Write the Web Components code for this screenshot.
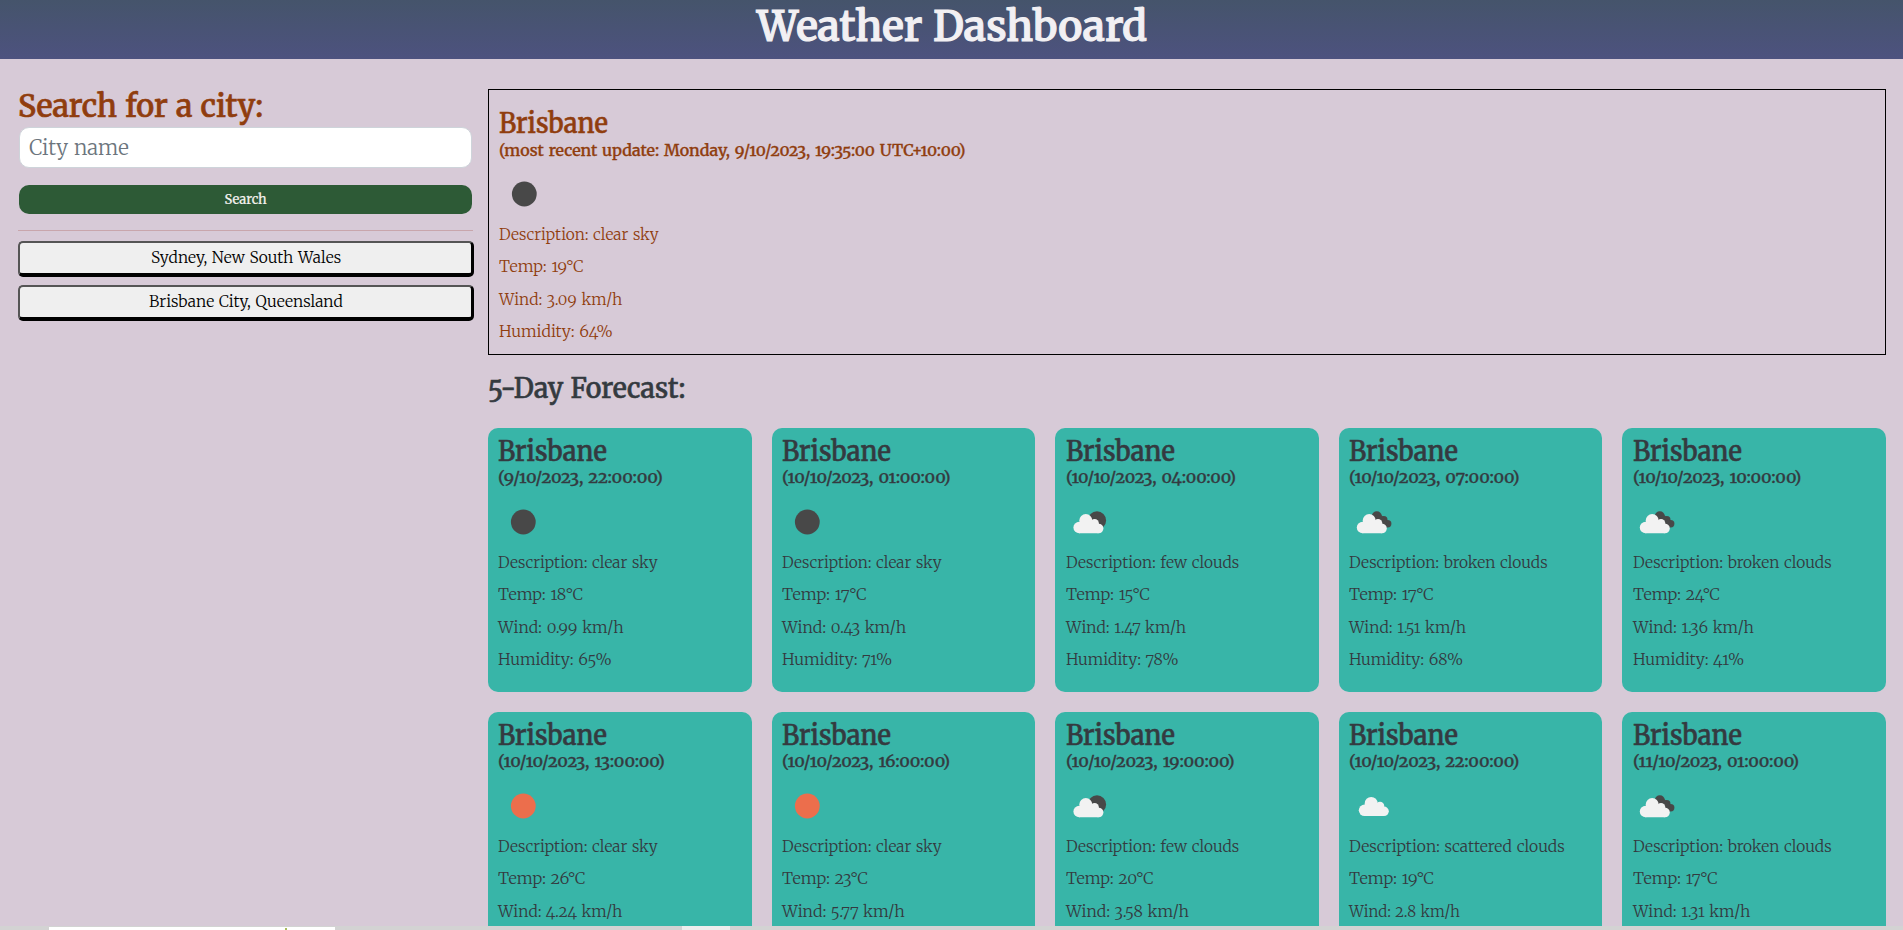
<!DOCTYPE html>
<html lang="en">
<head>
<meta charset="utf-8">
<title>Weather Dashboard</title>
<style>
html,body{margin:0;height:100%;overflow:hidden;background:#d7cad7}
body{font-family:"Merriweather","DejaVu Serif Condensed","DejaVu Serif","Liberation Serif",serif;font-size:16px;font-weight:300;font-variant-numeric:oldstyle-nums;word-spacing:1px}
</style>
</head>
<body>
<weather-app></weather-app>
<script>
const define=(name,css,html,setup)=>customElements.define(name,class extends HTMLElement{
  connectedCallback(){
    if(this.shadowRoot)return;
    const root=this.attachShadow({mode:'open'});
    const t=document.createElement('template');
    t.innerHTML=`<style>${css}</style>${typeof html==='function'?html(this):html}`;
    root.append(t.content.cloneNode(true));
    if(setup)setup(this,root);
  }
});

/* A single line of text condensed or widened to a given measure. */
define('fit-text',`
:host{display:inline-block;white-space:nowrap;text-align:left;vertical-align:top}
span{display:inline-block;transform-origin:0 50%}
`,'<span><slot></slot></span>',(el,root)=>{
  const w=+el.getAttribute('w'),s=root.querySelector('span');
  el.style.width=w+'px';
  s.style.transform=`scaleX(${w/s.offsetWidth})`;
});

const CLOUD='<g fill="#f2f2f2"><circle cx="14.2" cy="30.5" r="5.8"/><circle cx="20.8" cy="23.6" r="6.5"/><circle cx="29.6" cy="26.2" r="4.3"/><circle cx="33.6" cy="31.5" r="4.8"/><path d="M14 25h12l6 3 1.6 8.3H14z"/></g>';
const ICONS={
  moon:'<circle cx="25.3" cy="25" r="12.4" fill="#484848"/>',
  sun:'<circle cx="25.3" cy="25" r="12.4" fill="#ec6e4c"/>',
  few:'<circle cx="32" cy="23.4" r="9.1" fill="#484848"/>'+CLOUD,
  broken:'<g fill="#484848"><circle cx="27.8" cy="19.3" r="5"/><circle cx="34.8" cy="22.8" r="3.7"/><circle cx="38.7" cy="26.8" r="3.7"/><path d="M24 19l8-1 5 4 1 8.5h-5z"/></g><g transform="translate(-.6)">'+CLOUD+'</g>',
  scattered:'<g transform="translate(1.4 -1.2)">'+CLOUD+'</g>'
};
define('weather-icon',':host{display:block;width:50px;height:50px}svg{display:block}',
  el=>`<svg width="50" height="50" viewBox="0 0 50 50">${ICONS[el.getAttribute('kind')]}</svg>`);

define('weather-report',`
:host{display:block;box-sizing:border-box;color:#343a40}
h3,h4,p{margin:0;font-weight:300}
h3{font-size:27px;line-height:28px;font-weight:500;-webkit-text-stroke:.6px currentColor}
h4{font-size:16px;line-height:20px;margin-top:2px;font-weight:500;-webkit-text-stroke:.35px currentColor}
weather-icon{margin:10px 0 -1.2px}
p{line-height:32.4px;height:32.4px}
fit-text{margin-left:.4px}
:host([current]) h4{margin-top:3px}
:host([current]) weather-icon{margin-top:9px}
`,el=>{
  const [date,icon,desc,temp,wind,hum]=el.getAttribute('data').split('|');
  const f=v=>{const [t,w]=v.split('~');return `<fit-text w="${w}">${t}</fit-text>`};
  return `<h3><fit-text w="108.5">Brisbane</fit-text></h3><h4>${f(date)}</h4>
<weather-icon kind="${icon}"></weather-icon>
<p>${f('Description: '+desc)}</p><p>${f('Temp: '+temp)}</p><p>${f('Wind: '+wind)}</p>${hum?`<p>${f('Humidity: '+hum)}</p>`:''}`;
});

define('app-header',`
:host{display:block;height:59px;background:linear-gradient(#45546b,#4d527f);color:#f2f0f3;text-align:center}
h1{margin:0;font-weight:600;font-size:42px;line-height:53px;-webkit-text-stroke:1.1px currentColor}
`,'<h1><fit-text w="390">Weather Dashboard</fit-text></h1>');

define('city-button',`
:host{display:block}
button{display:block;box-sizing:border-box;width:100%;height:36px;margin:0;padding:0;background:#efefef;color:#000;font:inherit;font-variant-numeric:oldstyle-nums;word-spacing:1px;line-height:29.5px;border:solid #000;border-width:2px 3px 4px 2px;border-top-color:#555;border-left-color:#555;border-radius:5px}
`,'<button><slot></slot></button>');

define('city-search',`
:host{display:block;width:456px;box-sizing:border-box;padding-top:28px}
h2{margin:0;color:#903d0e;font-weight:500;font-size:30.5px;line-height:38px;height:40px;-webkit-text-stroke:.7px currentColor}
.field{box-sizing:border-box;height:41px;margin:0 2px 0 1px;border:1px solid #ced4da;border-radius:10px;background:#fff;color:#6c757d;font-size:21px;line-height:39px;padding-left:8.6px}
.go{display:block;box-sizing:border-box;width:453px;height:29px;margin:17px 2px 16px 1px;padding:0;border:0;border-radius:10px;background:#2d5a36;color:#f5f3f0;font:inherit;font-size:13px;font-weight:400;line-height:26px;text-align:center;-webkit-text-stroke:.2px currentColor}
hr{height:1px;border:0;background:#c8a6ac;margin:0 1px 10px 0}
city-button+city-button{margin-top:8px}
`,`<h2><fit-text w="245.5">Search for a city:</fit-text></h2>
<div class="field" role="textbox"><fit-text w="100">City name</fit-text></div>
<button class="go"><fit-text w="42">Search</fit-text></button>
<hr>
<city-button><fit-text w="190">Sydney, New South Wales</fit-text></city-button>
<city-button><fit-text w="194">Brisbane City, Queensland</fit-text></city-button>`);

const DAYS=[
'(9/10/2023, 22:00:00)~165|moon|clear sky~160|18°C~84.5|0.99 km/h~125.5|65%~114',
'(10/10/2023, 01:00:00)~168|moon|clear sky~160|17°C~84|0.43 km/h~124|71%~110',
'(10/10/2023, 04:00:00)~170.5|few|few clouds~173|15°C~84|1.47 km/h~120.5|78%~113',
'(10/10/2023, 07:00:00)~170|broken|broken clouds~199|17°C~84|1.51 km/h~117.5|68%~114',
'(10/10/2023, 10:00:00)~168|broken|broken clouds~199|24°C~87|1.36 km/h~121|41%~111',
'(10/10/2023, 13:00:00)~167|sun|clear sky~160|26°C~87|4.24 km/h~124',
'(10/10/2023, 16:00:00)~168|sun|clear sky~160|23°C~86|5.77 km/h~122.5',
'(10/10/2023, 19:00:00)~168.5|few|few clouds~173|20°C~87.5|3.58 km/h~123',
'(10/10/2023, 22:00:00)~170|scattered|scattered clouds~215.5|19°C~85|2.8 km/h~111',
'(11/10/2023, 01:00:00)~166|broken|broken clouds~199|17°C~84|1.31 km/h~117.5'];

define('forecast-grid',`
:host{display:grid;grid-template-columns:repeat(5,1fr);grid-auto-rows:264px;gap:20px}
weather-report{background:#38b5a8;border-radius:10px;padding:9px 10px}
`,()=>DAYS.map(d=>`<weather-report data="${d}"></weather-report>`).join(''));

define('page-edge',`
:host{display:flex;align-items:flex-end;height:4px;background:#d3d3d3}
.a{width:286px;height:3px;margin-left:49px;background:#fff;display:flex;align-items:flex-end}
.a i{width:2px;height:2px;margin-left:236px;background:#a9bd5c}
.b{width:48px;height:4px;margin-left:347px;background:#eee}
`,'<div class="a"><i></i></div><div class="b"></div>');

define('weather-app',`
:host{display:grid;grid-template-rows:59px 867px 4px;height:930px;overflow:hidden}
main{display:grid;grid-template-columns:456px 1398px;column-gap:14px;padding-left:18px;overflow:hidden}
section{padding-top:30px;min-width:0}
.now{height:266px;border:1px solid #000;padding:19px 10px 0;color:#903d0e}
h2{margin:0;color:#343a40;font-weight:500;font-size:27px;line-height:36px;padding-top:14.5px;height:58.5px;-webkit-text-stroke:.6px currentColor}
`,`<app-header></app-header>
<main><city-search></city-search>
<section><weather-report class="now" current data="(most recent update: Monday, 9/10/2023, 19:35:00 UTC+10:00)~466|moon|clear sky~160|19°C~84.5|3.09 km/h~123.5|64%~114"></weather-report>
<h2><fit-text w="197">5-Day Forecast:</fit-text></h2>
<forecast-grid></forecast-grid></section></main>
<page-edge></page-edge>`);
</script>
</body>
</html>
